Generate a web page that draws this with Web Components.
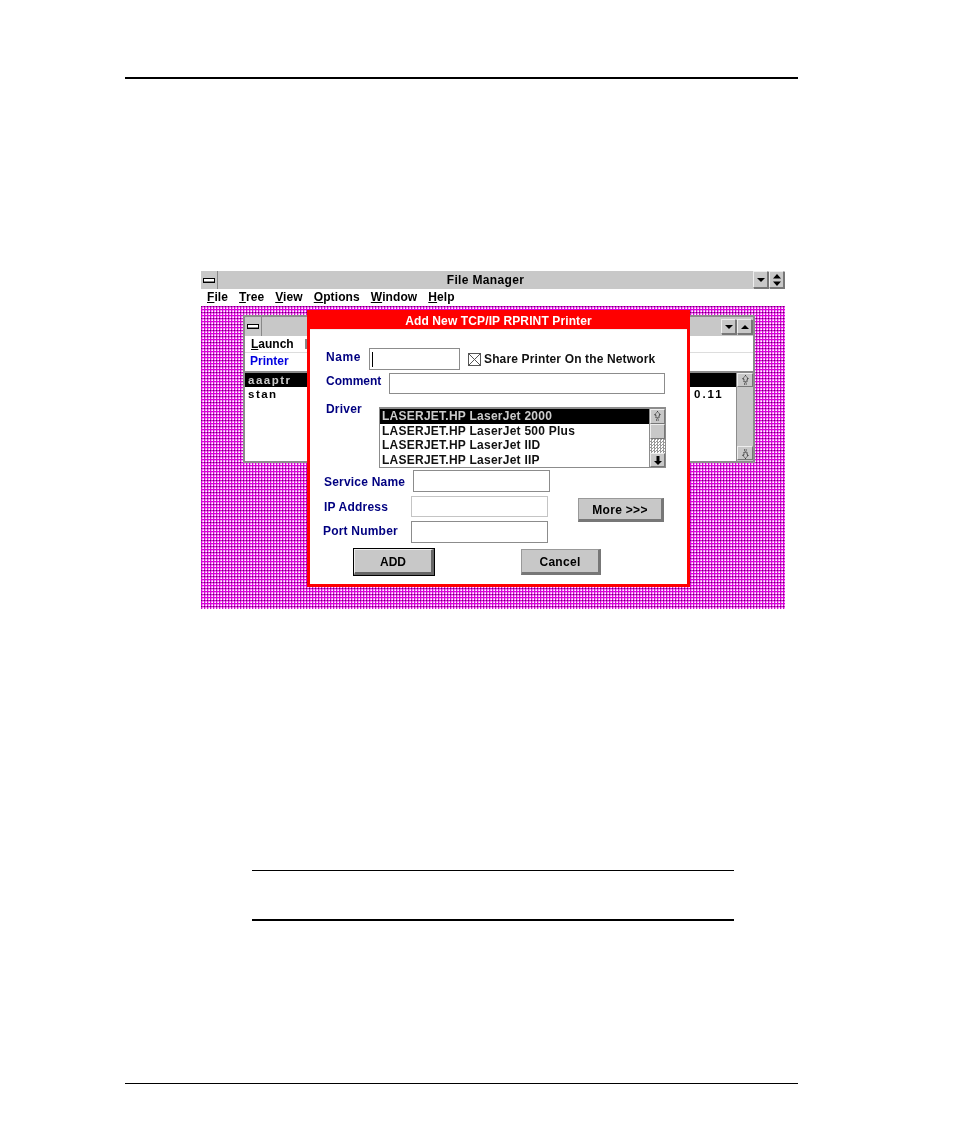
<!DOCTYPE html>
<html><head><meta charset="utf-8"><style>
html,body{margin:0;background:#fff}
body{width:954px;height:1145px;overflow:hidden;font-family:"Liberation Sans",Arial,sans-serif}
</style></head><body>
<manual-page>
  <fm-screen slot="shot"></fm-screen>
</manual-page>
<script>
function def(name,css,html){
  customElements.define(name,class extends HTMLElement{
    constructor(){super();const r=this.attachShadow({mode:'open'});r.innerHTML=`<style>${css}</style>${html}`;}
  });
}
const ICONS={
 sys:`<svg width="12" height="5" viewBox="0 0 12 5"><rect x=".5" y=".5" width="11" height="4" fill="#fff" stroke="#000"/><rect x="1" y="3" width="10" height="1" fill="#888"/></svg>`,
 down:`<svg width="8" height="4" viewBox="0 0 8 4"><path d="M0 0h8L4 4z" fill="#000"/></svg>`,
 up:`<svg width="8" height="4" viewBox="0 0 8 4"><path d="M0 4h8L4 0z" fill="#000"/></svg>`,
 updown:`<svg width="8" height="12" viewBox="0 0 8 12"><path d="M0 4.500h8L4 0zM0 7.500h8L4 12z" fill="#000"/></svg>`,
 sup:`<svg width="7" height="11" viewBox="0 0 7 11"><path d="M3.500 .5L6.500 4H5V7H2V4H.5z M2 9h3" fill="#c8c8c8" stroke="#111" stroke-dasharray="1 .7"/></svg>`,
 sdown:`<svg width="7" height="11" viewBox="0 0 7 11"><path d="M3.500 10.500L6.500 7H5V4H2V7H.5z M2 2h3" fill="#c8c8c8" stroke="#111" stroke-dasharray="1 .7"/></svg>`,
 arrdown:`<svg width="8" height="9" viewBox="0 0 8 9"><path d="M2.500 0h3v5H8L4 9 0 5h2.500z" fill="#000"/></svg>`
};
customElements.define('win-icon',class extends HTMLElement{
  constructor(){super();this.attachShadow({mode:'open'});}
  connectedCallback(){
    this.shadowRoot.innerHTML=`<style>:host{display:flex;align-items:center;justify-content:center}svg{display:block}</style>`+ICONS[this.getAttribute('name')];
  }
});
def('manual-page',`
:host{display:flex;flex-direction:column;width:954px;height:1145px;box-sizing:border-box;padding-top:77px}
.top{height:2px;background:#000;margin:0 156px 0 125px}
.shot{margin:192px 0 0 201px;width:584px;height:338px}
.note{margin:261px 220px 0 252px;height:48px;border-top:1px solid #000;border-bottom:2px solid #000}
.foot{margin:162px 156px 0 125px;height:1px;background:#000}
`,`<div class="top"></div><div class="shot"><slot name="shot"></slot></div><div class="note"></div><div class="foot"></div>`);

def('win-button',`:host{display:flex;align-items:center;justify-content:center;box-sizing:border-box;background:#c8c8c8;border:1px solid;border-color:#eee #777 #777 #eee;box-shadow:1px 1px 0 #777}`,`<slot></slot>`);
def('push-button',`
:host{display:flex;align-items:center;justify-content:center;box-sizing:border-box;background:#c8c8c8;color:#000;font:700 12px "Liberation Sans",Arial,sans-serif;letter-spacing:.3px;padding-top:1px;
border:1px solid #999;border-right:3px solid #777;border-bottom:3px solid #777}
:host([default]){outline:1px solid #000;border-color:#eee #666 #666 #eee;letter-spacing:0}
`,`<slot></slot>`);
def('text-field',`:host{display:block;box-sizing:border-box;background:#fff;border:1px solid #8c8c8c;position:relative}
:host([light]){border-color:#c4c4c4}
.caret{position:absolute;left:2px;top:3px;width:1px;height:15px;background:#000;display:none}
:host([caret]) .caret{display:block}`,`<div class="caret"></div>`);
def('dlg-label',`:host{display:block;color:#000080;font:700 12px "Liberation Sans",Arial,sans-serif;letter-spacing:.2px;white-space:nowrap}`,`<slot></slot>`);

def('driver-list',`
:host{display:flex;box-sizing:border-box;border:1px solid #8c8c8c;border-top-width:2px;background:#fff;font:700 12px "Liberation Sans",Arial,sans-serif;letter-spacing:.25px;color:#111}
.rows{flex:1;display:flex;flex-direction:column;min-width:0}
.row{height:14.5px;line-height:14.5px;padding-left:2px;white-space:nowrap}
.row.sel{background:#000;color:#ccc}
.bar{width:15px;display:grid;grid-template-rows:15px 15px 14px 14px;margin-right:0;border-left:1px solid #8c8c8c}
.bar win-button{box-shadow:none}
.dots{background:#fff;background-image:conic-gradient(#999 25%,#fff 0 50%,#999 0 75%,#fff 0);background-size:3px 3px}
`,`<div class="rows">
<div class="row sel">LASERJET.HP LaserJet 2000</div>
<div class="row">LASERJET.HP LaserJet 500 Plus</div>
<div class="row">LASERJET.HP LaserJet IID</div>
<div class="row">LASERJET.HP LaserJet IIP</div></div>
<div class="bar"><win-button><win-icon name="sup"></win-icon></win-button><win-button></win-button><div class="dots"></div><win-button><win-icon name="arrdown"></win-icon></win-button></div>`);

def('add-dialog',`
:host{display:block;box-sizing:border-box;background:#f00;padding:0 3px 3px;font:700 12px "Liberation Sans",Arial,sans-serif}
.title{height:19px;line-height:22px;text-align:center;color:#fff;font-size:12px;letter-spacing:.12px}
.body{position:relative;height:255px;background:#fff;border-top:1px solid #eee;box-sizing:border-box}
.body>*{position:absolute}
.share{display:flex;align-items:center;gap:3px;color:#111;letter-spacing:.14px;left:158px;top:20px;height:18px;white-space:nowrap}
.share svg{display:block}
`,`<div class="title">Add New TCP/IP RPRINT Printer</div>
<div class="body">
<dlg-label style="left:16px;top:20px;letter-spacing:.6px">Name</dlg-label>
<text-field caret style="left:59px;top:18px;width:91px;height:22px"></text-field>
<div class="share"><svg width="13" height="13" viewBox="0 0 13 13"><rect x=".5" y=".5" width="12" height="12" fill="#fff" stroke="#555"/><path d="M1 1l11 11M12 1L1 12" stroke="#555"/></svg><span>Share Printer On the Network</span></div>
<dlg-label style="left:16px;top:44px;letter-spacing:0">Comment</dlg-label>
<text-field style="left:79px;top:43px;width:276px;height:21px"></text-field>
<dlg-label style="left:16px;top:72px">Driver</dlg-label>
<driver-list style="left:69px;top:77px;width:287px;height:61px"></driver-list>
<dlg-label style="left:14px;top:145px">Service Name</dlg-label>
<text-field style="left:103px;top:140px;width:137px;height:22px"></text-field>
<dlg-label style="left:14px;top:170px">IP Address</dlg-label>
<text-field light style="left:101px;top:166px;width:137px;height:21px"></text-field>
<dlg-label style="left:13px;top:194px">Port Number</dlg-label>
<text-field style="left:101px;top:191px;width:137px;height:22px"></text-field>
<push-button style="left:268px;top:168px;width:86px;height:24px">More &gt;&gt;&gt;</push-button>
<push-button default style="left:44px;top:219px;width:80px;height:26px">ADD</push-button>
<push-button style="left:211px;top:219px;width:80px;height:26px">Cancel</push-button>
</div>`);

def('printer-window',`
:host{display:flex;flex-direction:column;box-sizing:border-box;background:#fff;border:2px solid #8c8c8c;font:700 12px "Liberation Sans",Arial,sans-serif;color:#000}
.tb{height:19px;background:#c8c8c8;display:flex;align-items:stretch}
.sys{width:16px;border-right:1px solid #888}
.tb .fill{flex:1}
.tb win-button{width:15px;margin:2px 1px 2px 0}
.menu{height:16px;line-height:17px;border-bottom:1px solid #ddd;padding-left:6px;display:flex;gap:11px;align-items:center}
.menu i{display:block;width:2px;height:10px;background:#888}
u{text-decoration:underline}
.hd{height:18px;line-height:17px;color:#0000e0;padding-left:5px;border-bottom:2px solid #8c8c8c}
.list{flex:1;display:flex;min-height:0}
.rows{flex:1;letter-spacing:1.5px;font-size:11.5px}
.r{height:14px;line-height:15px;padding-left:3px;position:relative}
.r.sel{background:#000;color:#ccc}
.ip{position:absolute;left:449px;top:0;letter-spacing:2px}
.bar{width:16px;background:#c8c8c8;border-left:1px solid #8c8c8c;display:flex;flex-direction:column;justify-content:space-between;padding-bottom:1px}
.bar win-button{height:14px;box-shadow:none}
`,`<div class="tb"><div class="sys"><win-icon name="sys" style="height:100%"></win-icon></div><div class="fill"></div><win-button><win-icon name="down"></win-icon></win-button><win-button><win-icon name="up"></win-icon></win-button></div>
<div class="menu"><span><u>L</u>aunch</span><i></i></div>
<div class="hd">Printer</div>
<div class="list"><div class="rows"><div class="r sel">aaaptr</div><div class="r">stan<span class="ip">0.11</span></div></div>
<div class="bar"><win-button><win-icon name="sup"></win-icon></win-button><win-button><win-icon name="sdown"></win-icon></win-button></div></div>`);

def('fm-screen',`
:host{display:flex;flex-direction:column;width:584px;height:338px;font:700 12px "Liberation Sans",Arial,sans-serif;color:#000;filter:blur(.3px)}
.tb{height:18px;background:#c8c8c8;display:flex;align-items:stretch}
.sys{width:16px;border-right:1px solid #888}
.t{flex:1;text-align:center;line-height:18px;letter-spacing:.35px}
.tb win-button{width:15px;margin:0 1px 1px 0}
.menu{height:17px;display:flex;gap:11px;padding-left:6px;line-height:17px;letter-spacing:.1px;background:#fff}
u{text-decoration:underline}
.desk{flex:1;position:relative;background-color:#fff;
background-image:
 radial-gradient(circle at .5px .5px,#503050 .6px,transparent .8px),
 linear-gradient(to bottom,#d800d8 1px,rgba(216,0,216,.3) 1px 2px,transparent 2px),
 linear-gradient(to right,#d800d8 1px,rgba(216,0,216,.3) 1px 2px,transparent 2px);
background-size:3px 6px,3px 3px,3px 3px}
printer-window{position:absolute;left:42px;top:9px;width:512px;height:148px}
add-dialog{position:absolute;left:106px;top:4px;width:383px;height:277px}
`,`<div class="tb"><div class="sys"><win-icon name="sys" style="height:100%"></win-icon></div><div class="t">File Manager</div><win-button><win-icon name="down"></win-icon></win-button><win-button><win-icon name="updown"></win-icon></win-button></div>
<div class="menu"><span><u>F</u>ile</span><span><u>T</u>ree</span><span><u>V</u>iew</span><span><u>O</u>ptions</span><span><u>W</u>indow</span><span><u>H</u>elp</span></div>
<div class="desk"><printer-window></printer-window><add-dialog></add-dialog></div>`);
</script>
</body></html>
